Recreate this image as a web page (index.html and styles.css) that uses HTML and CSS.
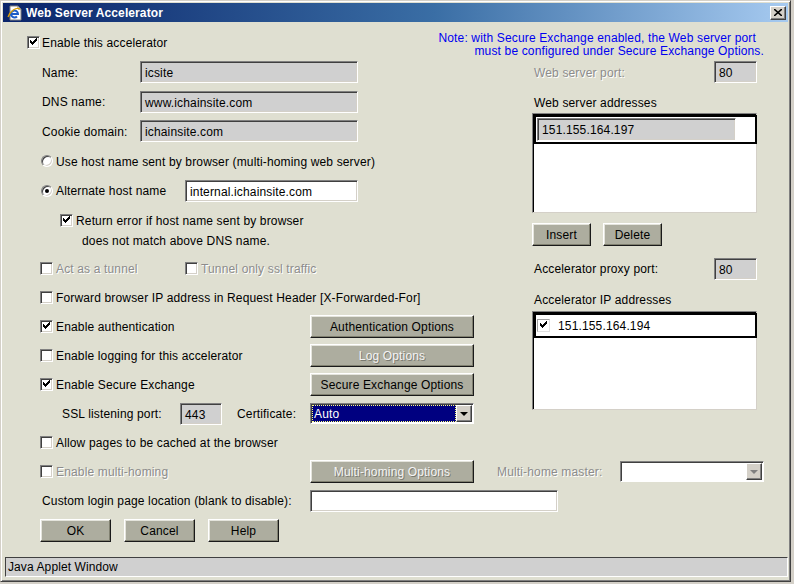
FILE: index.html
```html
<!DOCTYPE html>
<html>
<head>
<meta charset="utf-8">
<link rel="stylesheet" href="styles.css">
</head>
<body>
<div class="window">
  <div class="titlebar">
    <svg class="appicon" width="16" height="16" viewBox="0 0 16 16">
      <polygon points="3,1 11,1 14,4 14,15 3,15" fill="#ffffff" stroke="#808080" stroke-width="1"/>
      <polyline points="11,1 11,4 14,4" fill="none" stroke="#808080" stroke-width="1"/>
      <path d="M4.5 9 H11 A3.5 3.5 0 1 0 10 11.5" fill="none" stroke="#1c5cc8" stroke-width="2"/>
      <path d="M1 12 C3 6 9 2 13 4" fill="none" stroke="#e0a000" stroke-width="1.2"/>
    </svg>
    <span class="title">Web Server Accelerator</span>
    <span class="closebtn">
      <svg width="8" height="7" viewBox="0 0 8 7"><path d="M0 0 L8 7 M8 0 L0 7" stroke="#000" stroke-width="1.6"/></svg>
    </span>
  </div>

  <div class="content">
    <div class="top">
      <div class="left">
        <div class="row h29">
          <span class="cb checked"></span><span class="txt gap2">Enable this accelerator</span>
        </div>
        <div class="row h30">
          <span class="lbl w98">Name:</span><span class="field grey w218">icsite</span>
        </div>
        <div class="row h29">
          <span class="lbl w98">DNS name:</span><span class="field grey w218">www.ichainsite.com</span>
        </div>
        <div class="row h30">
          <span class="lbl w98">Cookie domain:</span><span class="field grey w218">ichainsite.com</span>
        </div>
        <div class="row h30">
          <span class="radio ind14"></span><span class="txt">Use host name sent by browser (multi-homing web server)</span>
        </div>
        <div class="row h29">
          <span class="radio ind14 on"></span><span class="txt w129">Alternate host name</span><span class="field white w173">internal.ichainsite.com</span>
        </div>
        <div class="block-return">
          <div class="line"><span class="cb checked"></span><span class="txt">Return error if host name sent by browser</span></div>
          <div class="line indent2">does not match above DNS name.</div>
        </div>
        <div class="row h29">
          <span class="cell w145 ind13"><span class="cb"></span><span class="txt dis">Act as a tunnel</span></span>
          <span class="cb"></span><span class="txt dis">Tunnel only ssl traffic</span>
        </div>
        <div class="row h29">
          <span class="cb ind13"></span><span class="txt">Forward browser IP address in Request Header [X-Forwarded-For]</span>
        </div>
        <div class="row h29">
          <span class="cell w270 ind13"><span class="cb checked"></span><span class="txt">Enable authentication</span></span>
          <span class="btn w164">Authentication Options</span>
        </div>
        <div class="row h29">
          <span class="cell w270 ind13"><span class="cb"></span><span class="txt">Enable logging for this accelerator</span></span>
          <span class="btn w164 disbtn">Log Options</span>
        </div>
        <div class="row h29">
          <span class="cell w270 ind13"><span class="cb checked"></span><span class="txt">Enable Secure Exchange</span></span>
          <span class="btn w164">Secure Exchange Options</span>
        </div>
        <div class="row h29">
          <span class="lbl ssl">SSL listening port:</span><span class="field grey w42">443</span>
          <span class="lbl cert">Certificate:</span>
          <span class="combo w164 sel"><span class="combo-val"><span class="focus">Auto</span></span><span class="arrow"><i class="tri"></i></span></span>
        </div>
        <div class="row h29">
          <span class="cb ind13"></span><span class="txt">Allow pages to be cached at the browser</span>
        </div>
      </div>

      <div class="right">
        <div class="note">
          <div class="note1">Note: with Secure Exchange enabled, the Web server port</div>
          <div>must be configured under Secure Exchange Options.</div>
        </div>
        <div class="rrow portrow">
          <span class="txt dis rlbl">Web server port:</span><span class="field grey w43">80</span>
        </div>
        <div class="rcap cap1">Web server addresses</div>
        <div class="listbox lb1">
          <div class="listrow">
            <span class="field grey inrow">151.155.164.197</span>
          </div>
        </div>
        <div class="btnrow">
          <span class="btn w59">Insert</span><span class="btn w59">Delete</span>
        </div>
        <div class="rrow proxyrow">
          <span class="txt rlbl">Accelerator proxy port:</span><span class="field grey w43">80</span>
        </div>
        <div class="rcap cap2">Accelerator IP addresses</div>
        <div class="listbox lb2">
          <div class="listrow row2">
            <span class="cb checked light"></span><span class="iptxt">151.155.164.194</span>
          </div>
        </div>
      </div>
    </div>

    <div class="row h29">
      <span class="cell w270 ind13"><span class="cb"></span><span class="txt dis">Enable multi-homing</span></span>
      <span class="btn w164 disbtn">Multi-homing Options</span>
      <span class="txt dis mhlbl">Multi-home master:</span>
      <span class="combo w144"><span class="combo-val white"></span><span class="arrow"><i class="tri distri"></i></span></span>
    </div>
    <div class="row h29">
      <span class="lbl w268">Custom login page location (blank to disable):</span><span class="field white w248"></span>
    </div>
    <div class="row h30 btns">
      <span class="btn w71">OK</span><span class="btn w71">Cancel</span><span class="btn w71">Help</span>
    </div>
  </div>

  <div class="status">Java Applet Window</div>
</div>
</body>
</html>
```

FILE: styles.css
```css
html, body {
  margin: 0;
  padding: 0;
  background: #d4d0c8;
}
body {
  width: 794px;
  height: 584px;
  overflow: hidden;
  font-family: "Liberation Sans", Arial, sans-serif;
  font-size: 12px;
  color: #000;
}
.window {
  box-sizing: border-box;
  width: 791px;
  height: 582px;
  display: flex;
  flex-direction: column;
  background: #dfdfd1;
  border-style: solid;
  border-width: 1px;
  border-color: #d4d0c8 #404040 #404040 #d4d0c8;
  box-shadow: inset 1px 1px #ffffff, inset -1px -1px #808080;
  padding: 2px;
}
.titlebar {
  height: 19px;
  flex: none;
  display: flex;
  align-items: center;
  background: linear-gradient(to right, #0a246a 0%, #3a6ea5 55%, #a6caf0 100%);
  color: #fff;
}
.appicon {
  margin-left: 4px;
  flex: none;
}
.title {
  margin-left: 3px;
  font-weight: bold;
  font-size: 12px;
  letter-spacing: 0.1px;
  flex: 1;
}
.closebtn {
  width: 16px;
  height: 14px;
  box-sizing: border-box;
  margin-right: 2px;
  background: #d4d0c8;
  border-style: solid;
  border-width: 1px;
  border-color: #ffffff #404040 #404040 #ffffff;
  box-shadow: inset -1px -1px #808080;
  display: flex;
  align-items: center;
  justify-content: center;
}
.content {
  flex: 1;
  padding: 6px 0 0 24px;
}
.top {
  display: grid;
  grid-template-columns: 505px 231px;
}
.row {
  display: flex;
  align-items: center;
  white-space: nowrap;
}
.h29 { height: 29px; }
.h30 { height: 30px; }
.txt { margin-left: 3px; letter-spacing: 0.15px; padding-top: 1px; }
.gap2 { margin-left: 2px; }
.lbl { letter-spacing: 0.15px; flex: none; padding-top: 1px; }
.w98 { margin-left: 15px; width: 98px; }
.w129 { width: 129px; flex: none; }
.w145 { width: 145px; }
.w270 { width: 270px; }
.w268 { margin-left: 15px; width: 268px; }
.cell { display: flex; align-items: center; flex: none; }
.ind13 { margin-left: 13px; }
.ind14 { margin-left: 14px; }
.dis {
  color: #8c8c8c;
  text-shadow: 1px 1px #ffffff;
}

/* sunken fields */
.field {
  box-sizing: border-box;
  height: 22px;
  flex: none;
  border-style: solid;
  border-width: 1px;
  border-color: #808080 #ffffff #ffffff #808080;
  box-shadow: inset 1px 1px #404040, inset -1px -1px #d4d0c8;
  padding: 2px 0 0 4px;
  line-height: 18px;
  letter-spacing: 0.15px;
  overflow: hidden;
}
.grey { background: #d0d0d0; }
.white { background: #ffffff; }
.w218 { width: 218px; }
.w173 { width: 173px; }
.w42 { width: 42px; }
.w43 { width: 43px; }
.w248 { width: 248px; }

/* checkbox */
.cb {
  box-sizing: border-box;
  width: 13px;
  height: 13px;
  flex: none;
  background: #fff;
  border-style: solid;
  border-width: 1px;
  border-color: #808080 #ffffff #ffffff #808080;
  box-shadow: inset 1px 1px #404040, inset -1px -1px #d4d0c8;
  position: relative;
}
.cb.checked::after {
  content: "";
  position: absolute;
  left: 2px;
  top: 1px;
  width: 7px;
  height: 7px;
  background: linear-gradient(#000, #000) 0 2px / 1px 3px no-repeat,
              linear-gradient(#000, #000) 1px 3px / 1px 3px no-repeat,
              linear-gradient(#000, #000) 2px 4px / 1px 3px no-repeat,
              linear-gradient(#000, #000) 3px 3px / 1px 3px no-repeat,
              linear-gradient(#000, #000) 4px 2px / 1px 3px no-repeat,
              linear-gradient(#000, #000) 5px 1px / 1px 3px no-repeat,
              linear-gradient(#000, #000) 6px 0 / 1px 3px no-repeat;
}
.cb.light {
  border-color: #a0a0a0 #e0e0e0 #e0e0e0 #a0a0a0;
  box-shadow: none;
}

/* radio */
.radio {
  box-sizing: border-box;
  width: 12px;
  height: 12px;
  flex: none;
  border-radius: 50%;
  background: #fff;
  border-style: solid;
  border-width: 1px;
  border-color: #808080 #ffffff #ffffff #808080;
  box-shadow: inset 1px 1px #404040, inset -1px -1px #d4d0c8;
  position: relative;
}
.radio.on::after {
  content: "";
  position: absolute;
  left: 3px;
  top: 3px;
  width: 4px;
  height: 4px;
  border-radius: 50%;
  background: #000;
}

.block-return {
  height: 49px;
  box-sizing: border-box;
  padding-top: 5px;
}
.block-return .line {
  height: 20px;
  display: flex;
  align-items: center;
  padding-left: 33px;
  letter-spacing: 0.15px;
  white-space: nowrap;
}
.block-return .indent2 { padding-left: 55px; padding-top: 1px; }

/* buttons */
.btn {
  box-sizing: border-box;
  height: 23px;
  flex: none;
  display: flex;
  align-items: center;
  justify-content: center;
  padding-top: 1px;
  background: #adad9f;
  border-style: solid;
  border-width: 1px;
  border-color: #ffffff #1a1a1a #1a1a1a #ffffff;
  box-shadow: inset -1px -1px #808070, inset 1px 1px #e4e4dc;
  letter-spacing: 0.15px;
  white-space: nowrap;
}
.w164 { width: 164px; }
.w59 { width: 59px; }
.w71 { width: 71px; }
.disbtn {
  color: #f4f4f4;
  text-shadow: 1px 1px #7a7a70;
}

/* combo */
.combo {
  box-sizing: border-box;
  height: 21px;
  flex: none;
  display: flex;
  border-style: solid;
  border-width: 1px;
  border-color: #808080 #ffffff #ffffff #808080;
  box-shadow: inset 1px 1px #404040;
  padding: 1px 1px 1px 1px;
  background: #fff;
}
.w144 { width: 144px; }
.combo-val {
  flex: 1;
  display: flex;
  align-items: stretch;
}
.sel .combo-val { background: #000080; color: #fff; }
.focus {
  flex: 1;
  border: 1px dotted #ffff80;
  line-height: 16px;
  padding-left: 1px;
  letter-spacing: 0.15px;
}
.arrow {
  box-sizing: border-box;
  width: 16px;
  flex: none;
  background: #d4d0c8;
  border-style: solid;
  border-width: 1px;
  border-color: #ffffff #404040 #404040 #ffffff;
  box-shadow: inset -1px -1px #808080;
  display: flex;
  align-items: center;
  justify-content: center;
}
.tri {
  width: 0;
  height: 0;
  border-left: 4px solid transparent;
  border-right: 4px solid transparent;
  border-top: 4px solid #000;
  margin-top: 1px;
}
.tri.distri { border-top-color: #808080; }

.ssl { margin-left: 35px; width: 118px; }
.cert { margin-left: 15px; width: 73px; }

.mhlbl { margin-left: 23px; width: 123px; flex: none; }
.btns .btn { margin-left: 13px; }

/* right column */
.right {
  display: flex;
  flex-direction: column;
}
.note {
  height: 29px;
  box-sizing: border-box;
  padding-top: 4px;
  margin-left: -120px;
  margin-right: -1px;
  text-align: right;
  line-height: 13px;
  color: #0000f0;
  letter-spacing: 0.15px;
  white-space: nowrap;
}
.note1 { margin-right: 8px; }
.rrow {
  display: flex;
  align-items: center;
}
.portrow { height: 30px; }
.rlbl { margin-left: 2px; width: 180px; flex: none; }
.rcap {
  margin-left: 2px;
  line-height: 14px;
  letter-spacing: 0.15px;
}
.cap1 { padding-top: 9px; height: 17px; }
.listbox {
  box-sizing: border-box;
  width: 225px;
  background: #fff;
  border-style: solid;
  border-width: 1px;
  border-color: #808080 #d4d0c8 #d4d0c8 #808080;
  box-shadow: inset 1px 1px #000;
  padding: 1px 1px 0 1px;
}
.lb1 { height: 100px; }
.listrow {
  box-sizing: border-box;
  height: 29px;
  width: 223px;
  border: 2px solid #000;
  display: flex;
  align-items: center;
  padding-left: 1px;
}
.inrow { width: 199px; height: 23px; }
.btnrow {
  display: flex;
  gap: 12px;
  margin-top: 10px;
}
.proxyrow { margin-top: 12px; height: 21px; }
.cap2 { margin-top: 14px; }
.lb2 { height: 99px; margin-top: 4px; }
.row2 { height: 25px; padding-left: 1px; }
.iptxt { margin-left: 8px; letter-spacing: 0.15px; padding-top: 1px; }

/* status bar */
.status {
  flex: none;
  box-sizing: border-box;
  height: 20px;
  margin: 0 0 2px 2px;
  background: #d0d0d0;
  border-style: solid;
  border-width: 1px;
  border-color: #404040 #ffffff #ffffff #404040;
  padding-left: 2px;
  line-height: 18px;
  letter-spacing: 0.1px;
}
```
